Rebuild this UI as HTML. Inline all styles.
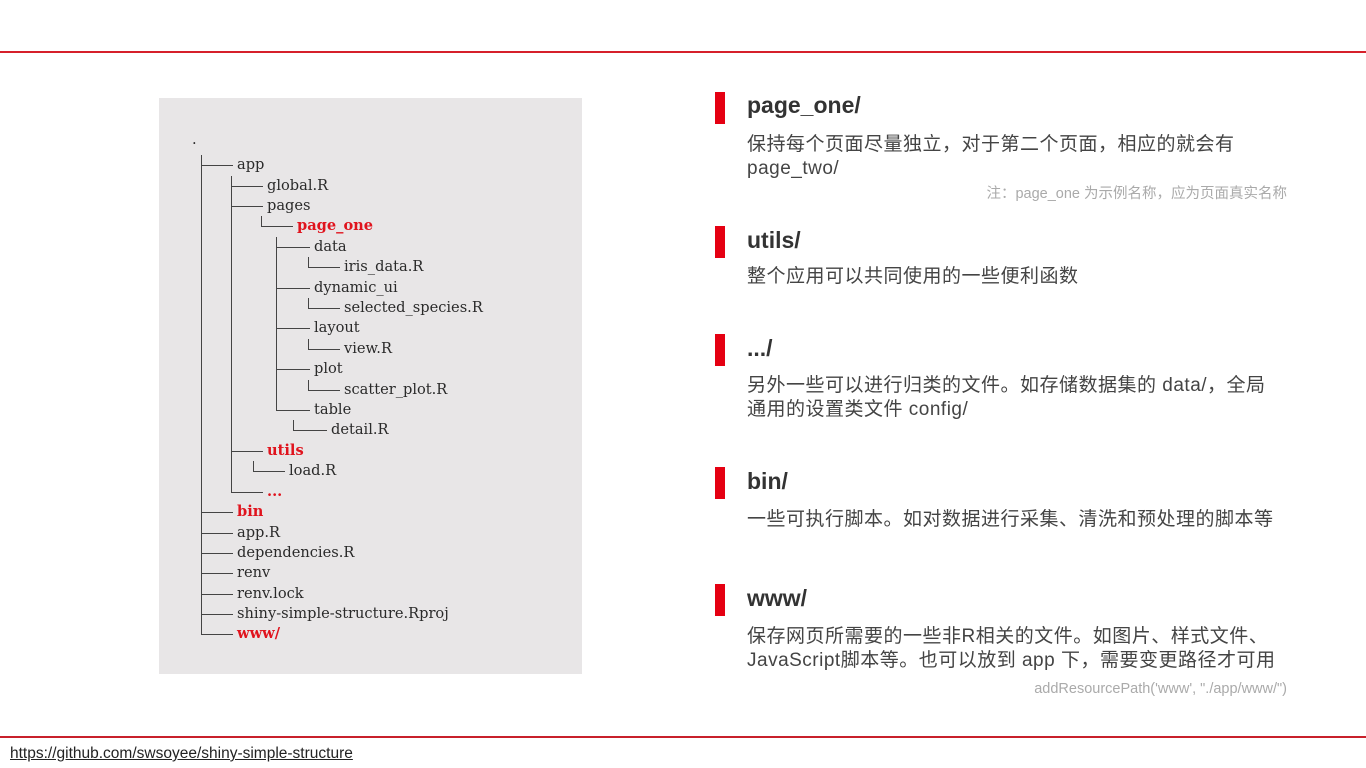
<!DOCTYPE html>
<html><head><meta charset="utf-8"><style>
body{margin:0;width:1366px;height:768px;background:#fff;position:relative;overflow:hidden;font-family:"Liberation Sans","Noto Sans CJK SC",sans-serif}
.a{position:absolute}
.box{left:159px;top:98px;width:423px;height:576px;background:#e8e6e7}
.t{position:absolute;font-family:"DejaVu Serif","Liberation Serif",serif;font-size:14.6px;line-height:20px;color:#2a2a2a;white-space:nowrap}
.r{color:#e0131d;font-weight:bold}
.v{position:absolute;width:1px;background:#444}
.h{position:absolute;height:1px;background:#444}
.bar{position:absolute;left:715px;width:10px;height:32px;background:#e50012}
.hd{position:absolute;left:747px;font-size:23px;font-weight:bold;color:#333;line-height:30px}
.bd{position:absolute;left:747px;font-size:19px;letter-spacing:0.5px;color:#444;line-height:24px;white-space:nowrap}
.nt{position:absolute;right:79px;font-size:14.5px;color:#aaa;white-space:nowrap}
</style></head><body>
<div class="a" style="left:0;top:51px;width:1366px;height:2px;background:#d6202b"></div>
<div class="a" style="left:0;top:736px;width:1366px;height:2px;background:#c8202b"></div>
<div class="a" style="left:10px;top:745px;font-size:15.5px;color:#222;text-decoration:underline">https://github.com/swsoyee/shiny-simple-structure</div>
<div class="a box"></div>
<div class="t" style="left:192px;top:130px">.</div>
<div class="v" style="left:201px;top:155px;height:480px"></div>
<div class="v" style="left:231px;top:176px;height:316px"></div>
<div class="v" style="left:261px;top:216px;height:11px"></div>
<div class="v" style="left:276px;top:237px;height:173px"></div>
<div class="v" style="left:308px;top:257px;height:10px"></div>
<div class="v" style="left:308px;top:298px;height:10px"></div>
<div class="v" style="left:308px;top:339px;height:10px"></div>
<div class="v" style="left:308px;top:380px;height:10px"></div>
<div class="v" style="left:293px;top:420px;height:11px"></div>
<div class="v" style="left:253px;top:461px;height:10px"></div>
<div class="h" style="left:201px;top:165px;width:32px"></div><div class="t" style="left:237px;top:155px">app</div>
<div class="h" style="left:231px;top:186px;width:32px"></div><div class="t" style="left:267px;top:176px">global.R</div>
<div class="h" style="left:231px;top:206px;width:32px"></div><div class="t" style="left:267px;top:196px">pages</div>
<div class="h" style="left:261px;top:226px;width:32px"></div><div class="t r" style="left:297px;top:216px">page_one</div>
<div class="h" style="left:276px;top:247px;width:34px"></div><div class="t" style="left:314px;top:237px">data</div>
<div class="h" style="left:308px;top:267px;width:32px"></div><div class="t" style="left:344px;top:257px">iris_data.R</div>
<div class="h" style="left:276px;top:288px;width:34px"></div><div class="t" style="left:314px;top:278px">dynamic_ui</div>
<div class="h" style="left:308px;top:308px;width:32px"></div><div class="t" style="left:344px;top:298px">selected_species.R</div>
<div class="h" style="left:276px;top:328px;width:34px"></div><div class="t" style="left:314px;top:318px">layout</div>
<div class="h" style="left:308px;top:349px;width:32px"></div><div class="t" style="left:344px;top:339px">view.R</div>
<div class="h" style="left:276px;top:369px;width:34px"></div><div class="t" style="left:314px;top:359px">plot</div>
<div class="h" style="left:308px;top:390px;width:32px"></div><div class="t" style="left:344px;top:380px">scatter_plot.R</div>
<div class="h" style="left:276px;top:410px;width:34px"></div><div class="t" style="left:314px;top:400px">table</div>
<div class="h" style="left:293px;top:430px;width:34px"></div><div class="t" style="left:331px;top:420px">detail.R</div>
<div class="h" style="left:231px;top:451px;width:32px"></div><div class="t r" style="left:267px;top:441px">utils</div>
<div class="h" style="left:253px;top:471px;width:32px"></div><div class="t" style="left:289px;top:461px">load.R</div>
<div class="h" style="left:231px;top:492px;width:32px"></div><div class="t r" style="left:267px;top:482px">...</div>
<div class="h" style="left:201px;top:512px;width:32px"></div><div class="t r" style="left:237px;top:502px">bin</div>
<div class="h" style="left:201px;top:533px;width:32px"></div><div class="t" style="left:237px;top:523px">app.R</div>
<div class="h" style="left:201px;top:553px;width:32px"></div><div class="t" style="left:237px;top:543px">dependencies.R</div>
<div class="h" style="left:201px;top:573px;width:32px"></div><div class="t" style="left:237px;top:563px">renv</div>
<div class="h" style="left:201px;top:594px;width:32px"></div><div class="t" style="left:237px;top:584px">renv.lock</div>
<div class="h" style="left:201px;top:614px;width:32px"></div><div class="t" style="left:237px;top:604px">shiny-simple-structure.Rproj</div>
<div class="h" style="left:201px;top:634px;width:32px"></div><div class="t r" style="left:237px;top:624px">www/</div>

<div class="bar" style="top:92px"></div><div class="hd" style="top:90px">page_one/</div>
<div class="bd" style="top:133px">保持每个页面尽量独立，对于第二个页面，相应的就会有<br>page_two/</div>
<div class="nt" style="top:182px">注：page_one 为示例名称，应为页面真实名称</div>
<div class="bar" style="top:226px"></div><div class="hd" style="top:225px">utils/</div>
<div class="bd" style="top:265px">整个应用可以共同使用的一些便利函数</div>
<div class="bar" style="top:334px"></div><div class="hd" style="top:333px">.../</div>
<div class="bd" style="top:374px">另外一些可以进行归类的文件。如存储数据集的 data/，全局<br>通用的设置类文件 config/</div>
<div class="bar" style="top:467px"></div><div class="hd" style="top:466px">bin/</div>
<div class="bd" style="top:508px">一些可执行脚本。如对数据进行采集、清洗和预处理的脚本等</div>
<div class="bar" style="top:584px"></div><div class="hd" style="top:583px">www/</div>
<div class="bd" style="top:625px">保存网页所需要的一些非R相关的文件。如图片、样式文件、<br>JavaScript脚本等。也可以放到 app 下，需要变更路径才可用</div>
<div class="nt" style="top:681px">addResourcePath('www', "./app/www/")</div>
</body></html>
